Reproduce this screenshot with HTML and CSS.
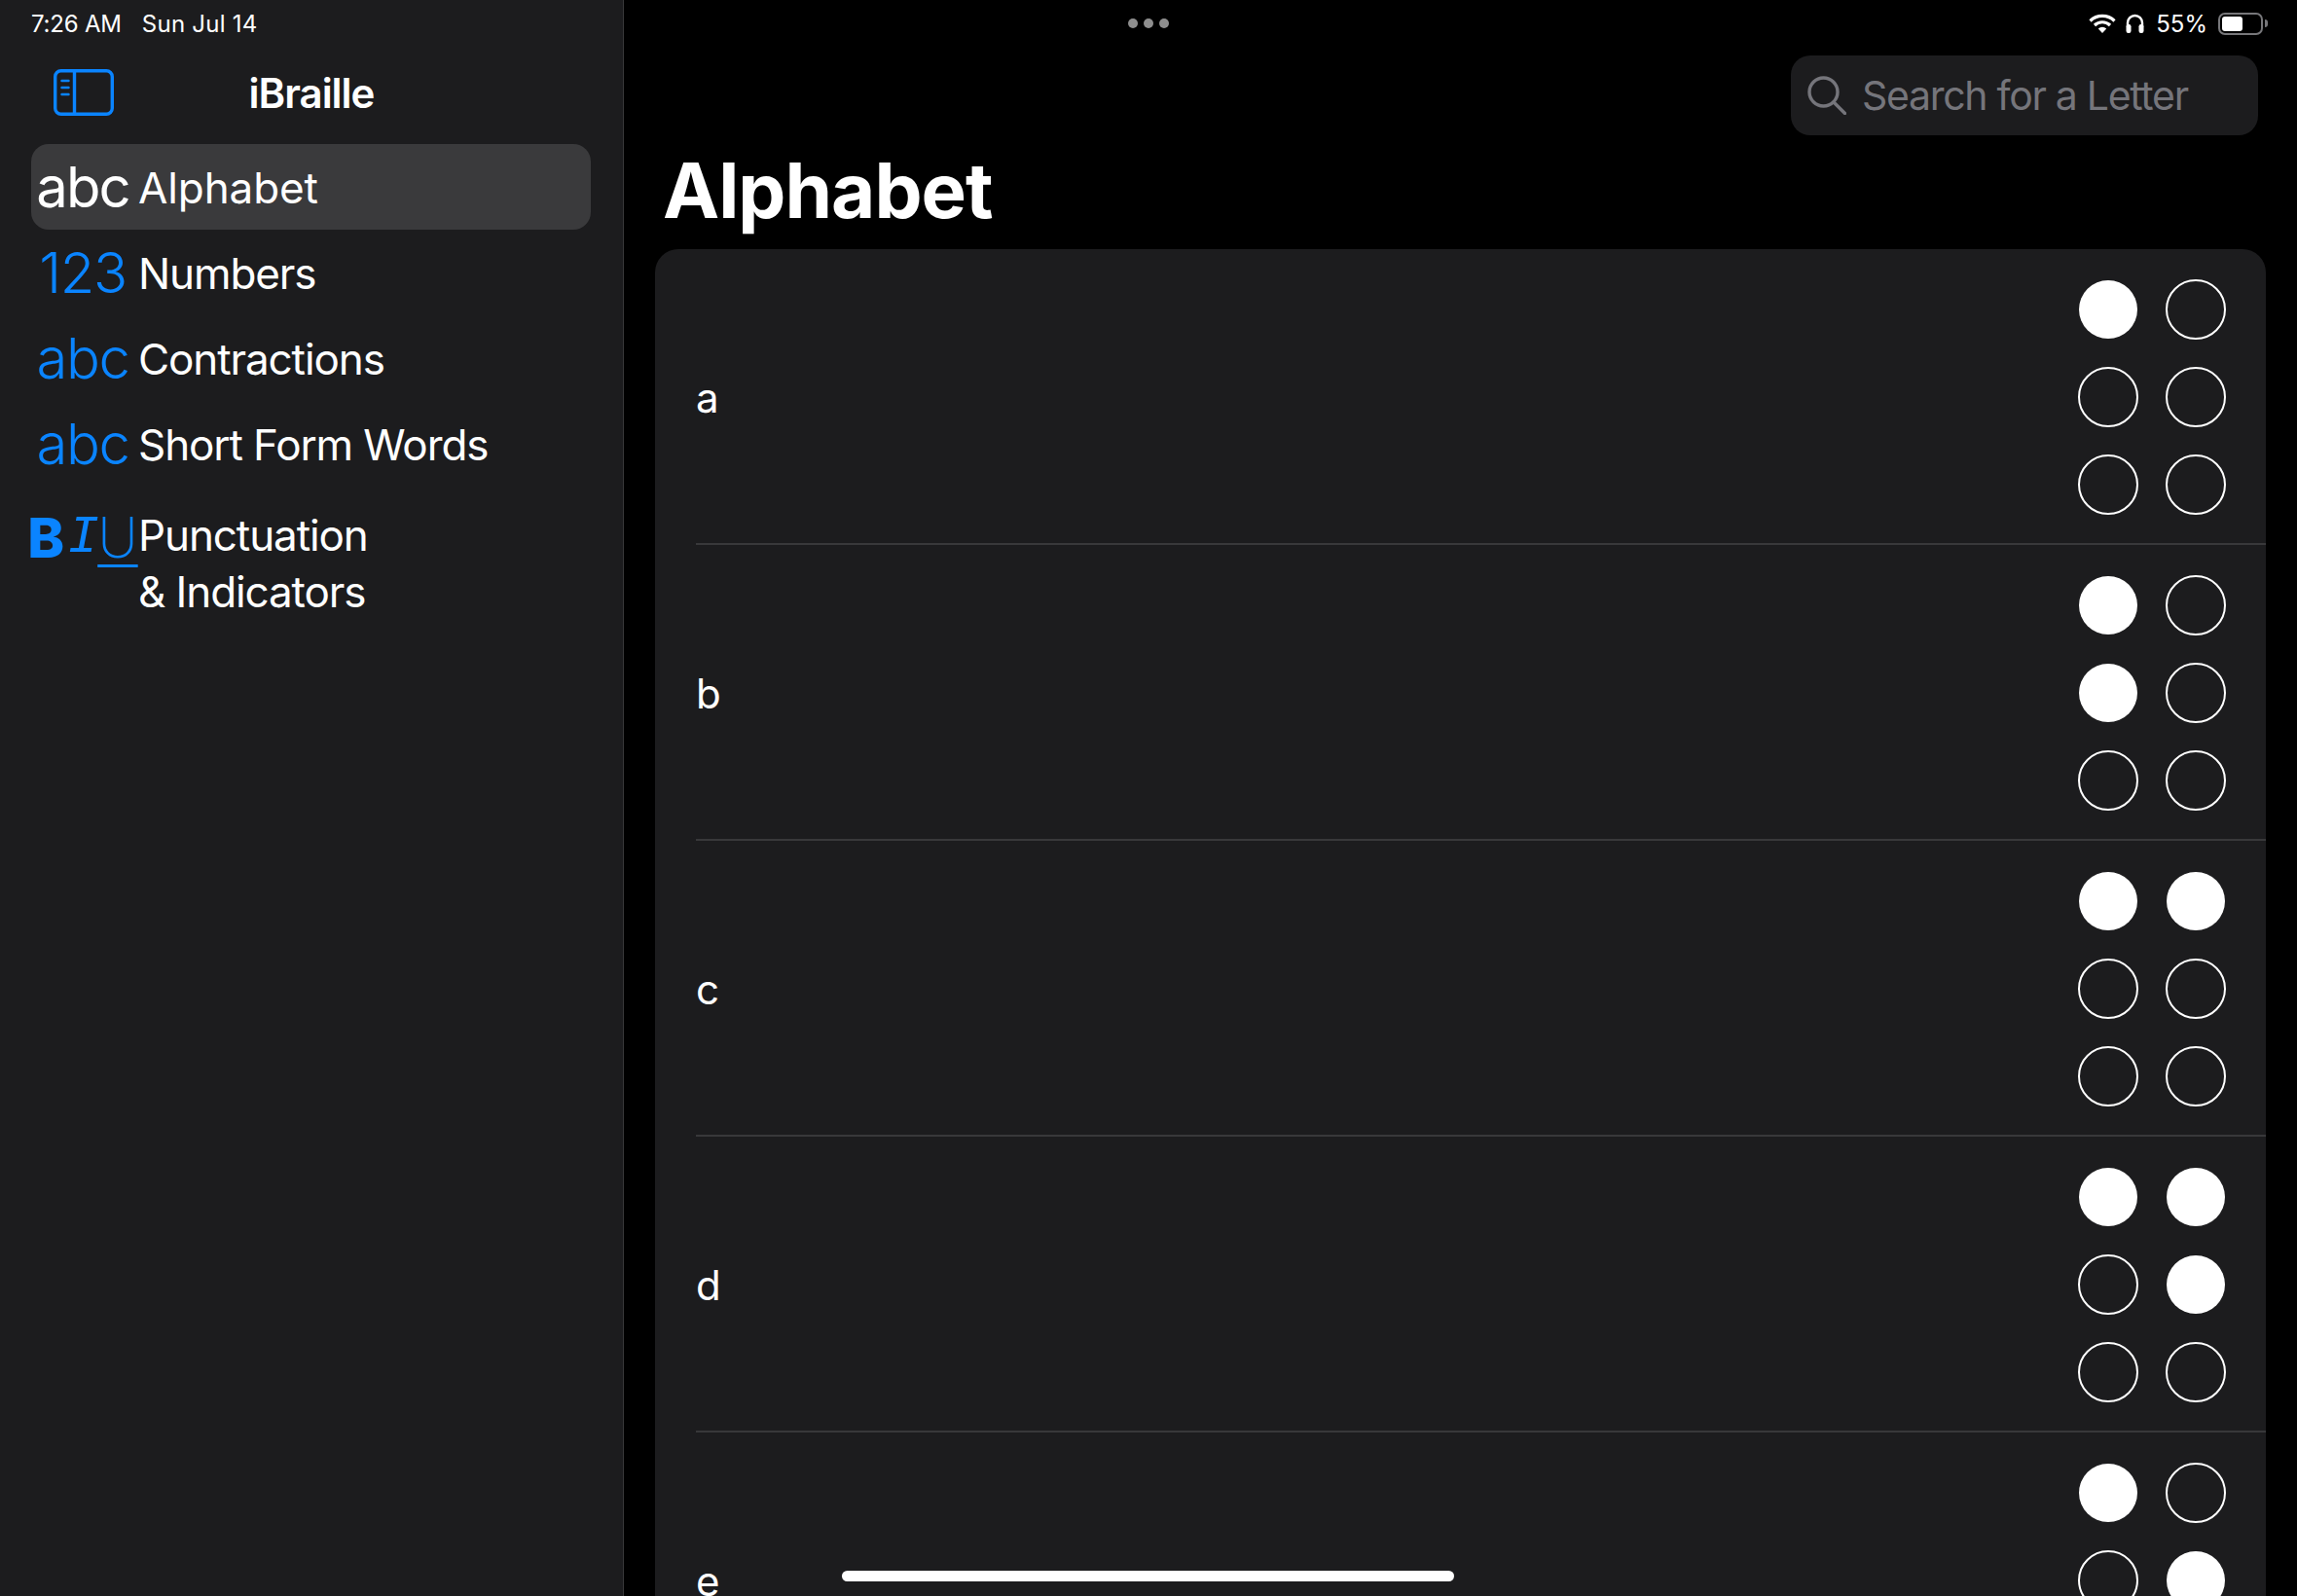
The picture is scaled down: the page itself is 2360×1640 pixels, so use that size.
FILE: index.html
```html
<!DOCTYPE html>
<html lang="en">
<head>
<meta charset="utf-8">
<title>iBraille</title>
<link rel="stylesheet" href="styles.css">
</head>
<body>
<div class="app">
  <aside class="sidebar">
    <div class="status-left"><span>7:26 AM</span><span class="date">Sun Jul 14</span></div>
    <header class="side-head">
      <svg class="side-toggle" viewBox="0 0 62 48" fill="none" stroke="#0a84ff" stroke-width="3.400" stroke-linecap="round">
        <rect x="1.700" y="1.700" width="58.600" height="44.600" rx="6"/>
        <path d="M21.500 2v44"/>
        <path d="M8.500 12h7M8.500 19h7M8.500 26h7" stroke-width="2.400"/>
      </svg>
      <h2 class="side-title">iBraille</h2>
    </header>
    <nav class="nav">
      <a class="nav-row selected"><span class="nav-icon">abc</span><span class="nav-text">Alphabet</span></a>
      <a class="nav-row"><span class="nav-icon">123</span><span class="nav-text">Numbers</span></a>
      <a class="nav-row"><span class="nav-icon">abc</span><span class="nav-text">Contractions</span></a>
      <a class="nav-row"><span class="nav-icon">abc</span><span class="nav-text">Short Form Words</span></a>
      <a class="nav-row tall"><span class="nav-icon biu"><b>B</b><i>I</i><u>U</u></span><span class="nav-text">Punctuation<br>&amp; Indicators</span></a>
    </nav>
  </aside>
  <main class="main">
    <div class="status-right">
      <svg class="wifi" viewBox="0 0 28 20" fill="none" stroke="#fff" stroke-width="3.200">
        <path d="M1.500 7.500a18 18 0 0 1 25 0"/>
        <path d="M6 12a11.500 11.500 0 0 1 16 0"/>
        <path d="M14 20l-4.200-4.600a6 6 0 0 1 8.400 0z" fill="#fff" stroke="none"/>
      </svg>
      <svg class="phones" viewBox="0 0 19 20" fill="none">
        <path d="M2 13V9.500a7.500 7.500 0 0 1 15 0V13" stroke="#fff" stroke-width="2.400"/>
        <rect x="0.500" y="11" width="5" height="9" rx="2.200" fill="#fff"/>
        <rect x="13.500" y="11" width="5" height="9" rx="2.200" fill="#fff"/>
      </svg>
      <span class="pct">55%</span>
      <span class="battery"><span class="battery-fill"></span></span>
      <span class="battery-nub"></span>
    </div>
    <div class="search">
      <svg class="search-icon" viewBox="0 0 40 40" fill="none" stroke="#75757b" stroke-width="3.400" stroke-linecap="round">
        <circle cx="16.500" cy="16.500" r="14.500"/>
        <path d="M27 27l11.500 11.500"/>
      </svg>
      <span class="search-text">Search for a Letter</span>
    </div>
    <h1 class="title">Alphabet</h1>
    <section class="card">
      <div class="row"><span class="letter">a</span>
        <div class="cell"><i class="dot on"></i><i class="dot"></i><i class="dot"></i><i class="dot"></i><i class="dot"></i><i class="dot"></i></div></div>
      <div class="row"><span class="letter">b</span>
        <div class="cell"><i class="dot on"></i><i class="dot"></i><i class="dot on"></i><i class="dot"></i><i class="dot"></i><i class="dot"></i></div></div>
      <div class="row"><span class="letter">c</span>
        <div class="cell"><i class="dot on"></i><i class="dot on"></i><i class="dot"></i><i class="dot"></i><i class="dot"></i><i class="dot"></i></div></div>
      <div class="row"><span class="letter">d</span>
        <div class="cell"><i class="dot on"></i><i class="dot on"></i><i class="dot"></i><i class="dot on"></i><i class="dot"></i><i class="dot"></i></div></div>
      <div class="row"><span class="letter">e</span>
        <div class="cell"><i class="dot on"></i><i class="dot"></i><i class="dot"></i><i class="dot on"></i><i class="dot"></i><i class="dot"></i></div></div>
    </section>
  </main>
  <div class="multitask"><i></i><i></i><i></i></div>
  <div class="home"></div>
</div>
</body>
</html>
```
FILE: styles.css
```css
* { box-sizing: border-box; }
html, body { margin: 0; padding: 0; background: #000; }
body { font-family: Inter, "Liberation Sans", sans-serif; color: #fff; }
.app { position: relative; display: flex; width: 2360px; height: 1640px; overflow: hidden; background: #000; }

.sidebar { flex: 0 0 641px; background: #1c1c1e; border-right: 1px solid #38383a; padding: 0 33px 0 32px; }
.status-left { display: flex; gap: 21px; height: 48px; align-items: center; font-size: 24px; letter-spacing: -0.2px; }
.date { letter-spacing: 0.25px; }
.side-head { position: relative; display: flex; justify-content: center; align-items: center; height: 100px; padding-bottom: 6px; margin-left: -32px; margin-right: -33px; }
.side-toggle { position: absolute; left: 55px; top: 23px; width: 62px; height: 48px; }
.side-title { margin: 0; font-size: 42px; font-weight: 600; letter-spacing: -1px; }

.nav { display: flex; flex-direction: column; }
.nav-row { display: flex; align-items: center; gap: 4px; height: 88px; border-radius: 18px; color: #fff; }
.nav-row.selected { background: #3a3a3c; }
.nav-row.tall { height: auto; padding-top: 21px; align-items: flex-start; }
.nav-icon { flex: 0 0 106px; min-width: 0; display: flex; justify-content: center; font-size: 58px; font-weight: 300; color: #0a84ff; letter-spacing: -1.400px; line-height: 70px; white-space: nowrap; }
.selected .nav-icon { color: #fff; font-weight: 400; letter-spacing: -1.900px; }
.nav-text { padding-top: 2px; font-size: 44px; line-height: 58px; letter-spacing: -1.100px; white-space: nowrap; }
.selected .nav-text { letter-spacing: -0.100px; }
.tall .nav-text { padding-top: 0; }
.biu { padding-top: 3px; font-size: 57px; line-height: 57px; letter-spacing: 0; gap: 3px; }
.biu b { font-weight: 800; }
.biu i { font-family: "Liberation Mono", monospace; font-weight: 400; font-style: italic; font-size: 54px; width: 28px; text-align: center; }
.biu u { font-weight: 200; text-underline-offset: 7px; text-decoration-thickness: 3px; }

.main { flex: 1; min-width: 0; padding: 0 32px; }
.status-right { display: flex; justify-content: flex-end; align-items: center; height: 48px; margin-right: -2px; }
.wifi { width: 28px; height: 20px; }
.phones { width: 19px; height: 20px; margin-left: 10px; }
.pct { font-size: 24px; margin-left: 12px; }
.battery { display: flex; width: 46px; height: 23px; margin-left: 11px; padding: 2px; border: 2px solid #77777a; border-radius: 7px; }
.battery-fill { width: 21px; background: #fff; border-radius: 3px; }
.battery-nub { width: 3px; height: 8px; margin-left: 2px; background: #77777a; border-radius: 0 3px 3px 0; }

.search { display: flex; align-items: center; gap: 16px; width: 480px; height: 82px; margin: 9px 0 0 1167px; padding-left: 17px; background: #1c1c1e; border-radius: 20px; }
.search-icon { width: 40px; height: 40px; }
.search-text { font-size: 41px; color: #75757b; letter-spacing: -1.300px; }
.title { margin: 0; height: 117px; padding-left: 8px; font-size: 78px; line-height: 114px; font-weight: 700; letter-spacing: -1px; }

.card { background: #1c1c1e; border-radius: 24px 24px 0 0; height: 1500px; }
.row { display: flex; justify-content: space-between; align-items: center; height: 304px; margin-left: 42px; padding: 32px 42px 30px 0; border-bottom: 2px solid #38383a; }
.letter { font-size: 42px; }
.cell { display: grid; grid-template-columns: 60px 60px; grid-auto-rows: 60px; gap: 30px; }
.dot { display: block; border-radius: 50%; outline: 2px solid #fff; outline-offset: -1px; }
.dot.on { background: #fff; outline: none; }

.multitask { position: absolute; left: 1159px; top: 19px; display: flex; gap: 6px; }
.multitask i { display: block; width: 10px; height: 10px; border-radius: 50%; background: #8e8e8e; }
.home { position: absolute; left: 865px; top: 1614px; width: 629px; height: 11px; border-radius: 6px; background: #fff; }
```
